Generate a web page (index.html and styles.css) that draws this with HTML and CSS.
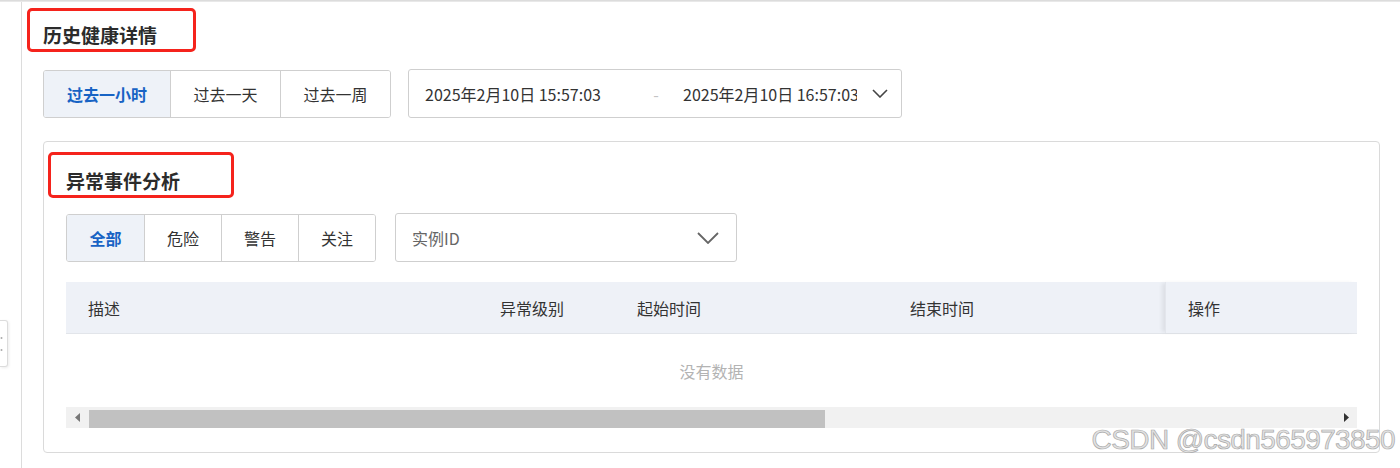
FILE: index.html
```html
<!DOCTYPE html>
<html lang="zh-CN">
<head>
<meta charset="utf-8">
<title>历史健康详情</title>
<link rel="stylesheet" href="styles.css">
</head>
<body>
<div class="topline"></div>
<div class="layout">
  <div class="gutter"></div>
  <div class="content">
    <div class="title-box title-main">历史健康详情</div>
    <div class="toolbar">
      <div class="seg seg-time">
        <div class="seg-btn active">过去一小时</div>
        <div class="seg-btn">过去一天</div>
        <div class="seg-btn">过去一周</div>
      </div>
      <div class="daterange">
        <div class="dr-start">2025年2月10日 15:57:03</div>
        <div class="dr-sep">-</div>
        <div class="dr-end">2025年2月10日 16:57:03</div>
        <svg class="chev-sm" width="16" height="9" viewBox="0 0 16 9"><path d="M1 1 L8 8 L15 1" fill="none" stroke="#444" stroke-width="1.6"/></svg>
      </div>
    </div>
    <div class="card">
      <div class="title-box title-sub">异常事件分析</div>
      <div class="filters">
        <div class="seg seg-level">
          <div class="seg-btn active">全部</div>
          <div class="seg-btn">危险</div>
          <div class="seg-btn">警告</div>
          <div class="seg-btn">关注</div>
        </div>
        <div class="select">
          <span class="placeholder">实例ID</span>
          <svg class="chev-lg" width="22" height="12" viewBox="0 0 22 12"><path d="M1 1 L11 11 L21 1" fill="none" stroke="#666" stroke-width="1.8"/></svg>
        </div>
      </div>
      <div class="table">
        <div class="thead">
          <div class="th">描述</div>
          <div class="th">异常级别</div>
          <div class="th">起始时间</div>
          <div class="th">结束时间</div>
          <div class="th th-fixed">操作</div>
        </div>
        <div class="tbody-empty">没有数据</div>
        <div class="hscroll">
          <div class="sc-arrow"><svg width="5" height="9" viewBox="0 0 5 9"><path d="M5 0 L0 4.5 L5 9 Z" fill="#777"/></svg></div>
          <div class="sc-thumb"></div>
          <div class="sc-arrow sc-right"><svg width="5" height="9" viewBox="0 0 5 9"><path d="M0 0 L5 4.5 L0 9 Z" fill="#333"/></svg></div>
        </div>
      </div>
    </div>
  </div>
</div>
<div class="handle"><svg width="6" height="18" viewBox="0 0 6 18"><circle cx="1.5" cy="3" r="1" fill="#aaa"/><circle cx="1.5" cy="15" r="1" fill="#aaa"/></svg></div>
<div class="watermark">CSDN @csdn565973850</div>
</body>
</html>
```

FILE: styles.css
```css
html, body {
  margin: 0;
  padding: 0;
}
body {
  width: 1400px;
  height: 468px;
  overflow: hidden;
  position: relative;
  background: #fff;
  color: #333;
  font-family: "Noto Sans CJK SC", "Noto Sans", sans-serif;
}
.topline {
  height: 2px;
  background: linear-gradient(#d6d6d6, #eeeeee);
}
.layout {
  display: flex;
  height: 466px;
}
.gutter {
  width: 21px;
  border-right: 1px solid #dcdcdc;
  flex: none;
}
.content {
  flex: 1;
  padding: 6px 20px 0 21px;
}
.title-box {
  box-sizing: border-box;
  border: 3px solid #f5231c;
  border-radius: 5px;
  font-size: 19px;
  font-weight: 700;
  line-height: 19px;
  color: #2b2b2b;
  white-space: nowrap;
}
.title-main {
  width: 169px;
  height: 44px;
  margin-left: -16px;
  padding: 14px 0 0 13px;
}
.toolbar {
  display: flex;
  align-items: flex-start;
  gap: 17px;
  margin-top: 18px;
}
.seg {
  display: flex;
  box-sizing: border-box;
  height: 48px;
  border: 1px solid #cfcfcf;
  border-radius: 3px;
  overflow: hidden;
}
.seg-btn {
  box-sizing: border-box;
  display: flex;
  align-items: center;
  justify-content: center;
  font-size: 16px;
  color: #333;
  background: #fff;
}
.seg-btn + .seg-btn {
  border-left: 1px solid #cfcfcf;
}
.seg-btn.active {
  background: #eef2f8;
  color: #1763c4;
  font-weight: 700;
}
.seg-time .seg-btn { width: 110px; }
.seg-time .seg-btn:first-child { width: 126px; }
.seg-level .seg-btn { width: 77px; }
.seg-level .seg-btn + .seg-btn { width: 77px; }
.daterange {
  box-sizing: border-box;
  width: 494px;
  height: 49px;
  margin-top: -1px;
  border: 1px solid #cfcfcf;
  border-radius: 3px;
  display: flex;
  align-items: center;
  padding-left: 16px;
  font-size: 16px;
  color: #333;
  white-space: nowrap;
}
.dr-start { width: 204px; }
.dr-sep {
  width: 54px;
  text-align: center;
  color: #c4c4c4;
}
.dr-end {
  width: 174px;
  overflow: hidden;
}
.chev-sm {
  margin-left: 15px;
  flex: none;
}
.card {
  box-sizing: border-box;
  margin-top: 23px;
  border: 1px solid #dadada;
  border-radius: 4px;
  padding: 0 22px 24px 22px;
  height: 312px;
}
.title-sub {
  width: 186px;
  height: 46px;
  margin-left: -18px;
  margin-top: 10px;
  padding: 16px 0 0 15px;
}
.filters {
  display: flex;
  align-items: flex-start;
  gap: 19px;
  margin-top: 16px;
}
.select {
  box-sizing: border-box;
  width: 342px;
  height: 49px;
  margin-top: -1px;
  border: 1px solid #cfcfcf;
  border-radius: 3px;
  display: flex;
  align-items: center;
  justify-content: space-between;
  padding: 0 17px 0 16px;
}
.placeholder {
  font-size: 16px;
  color: #666;
}
.table {
  margin-top: 20px;
}
.thead {
  display: grid;
  grid-template-columns: 412px 137px 273px 277px 1fr;
  height: 52px;
  background: #eef1f7;
  border-bottom: 1px solid #e2e5ea;
  box-sizing: border-box;
}
.th {
  display: flex;
  align-items: center;
  padding-left: 22px;
  font-size: 16px;
  color: #333;
}
.th-fixed {
  box-shadow: -4px 0 4px -1px rgba(0, 0, 0, 0.07);
  border-left: 1px solid #e3e6ec;
}
.tbody-empty {
  height: 73px;
  display: flex;
  align-items: center;
  justify-content: center;
  font-size: 16px;
  color: #b3b3b3;
}
.hscroll {
  height: 21px;
  background: #f1f1f1;
  display: flex;
  align-items: stretch;
}
.sc-arrow {
  width: 22px;
  display: flex;
  align-items: center;
  justify-content: center;
}
.sc-thumb {
  width: 736px;
  margin: 3px 0 0 1px;
  background: #c1c1c1;
}
.sc-right {
  margin-left: auto;
}
.handle {
  position: absolute;
  left: 0;
  top: 320px;
  width: 8px;
  height: 47px;
  box-sizing: border-box;
  border: 1px solid #dcdcdc;
  border-left: 0;
  border-radius: 0 3px 3px 0;
  background: #fff;
  box-shadow: 1px 1px 3px rgba(0, 0, 0, 0.08);
  display: flex;
  align-items: center;
}
.watermark {
  position: absolute;
  right: 5px;
  top: 424px;
  font-family: "Liberation Sans", Arial, sans-serif;
  font-size: 28px;
  letter-spacing: -0.6px;
  color: #e2e2e2;
  -webkit-text-stroke: 0.7px #a9a9a9;
  white-space: nowrap;
}
```
